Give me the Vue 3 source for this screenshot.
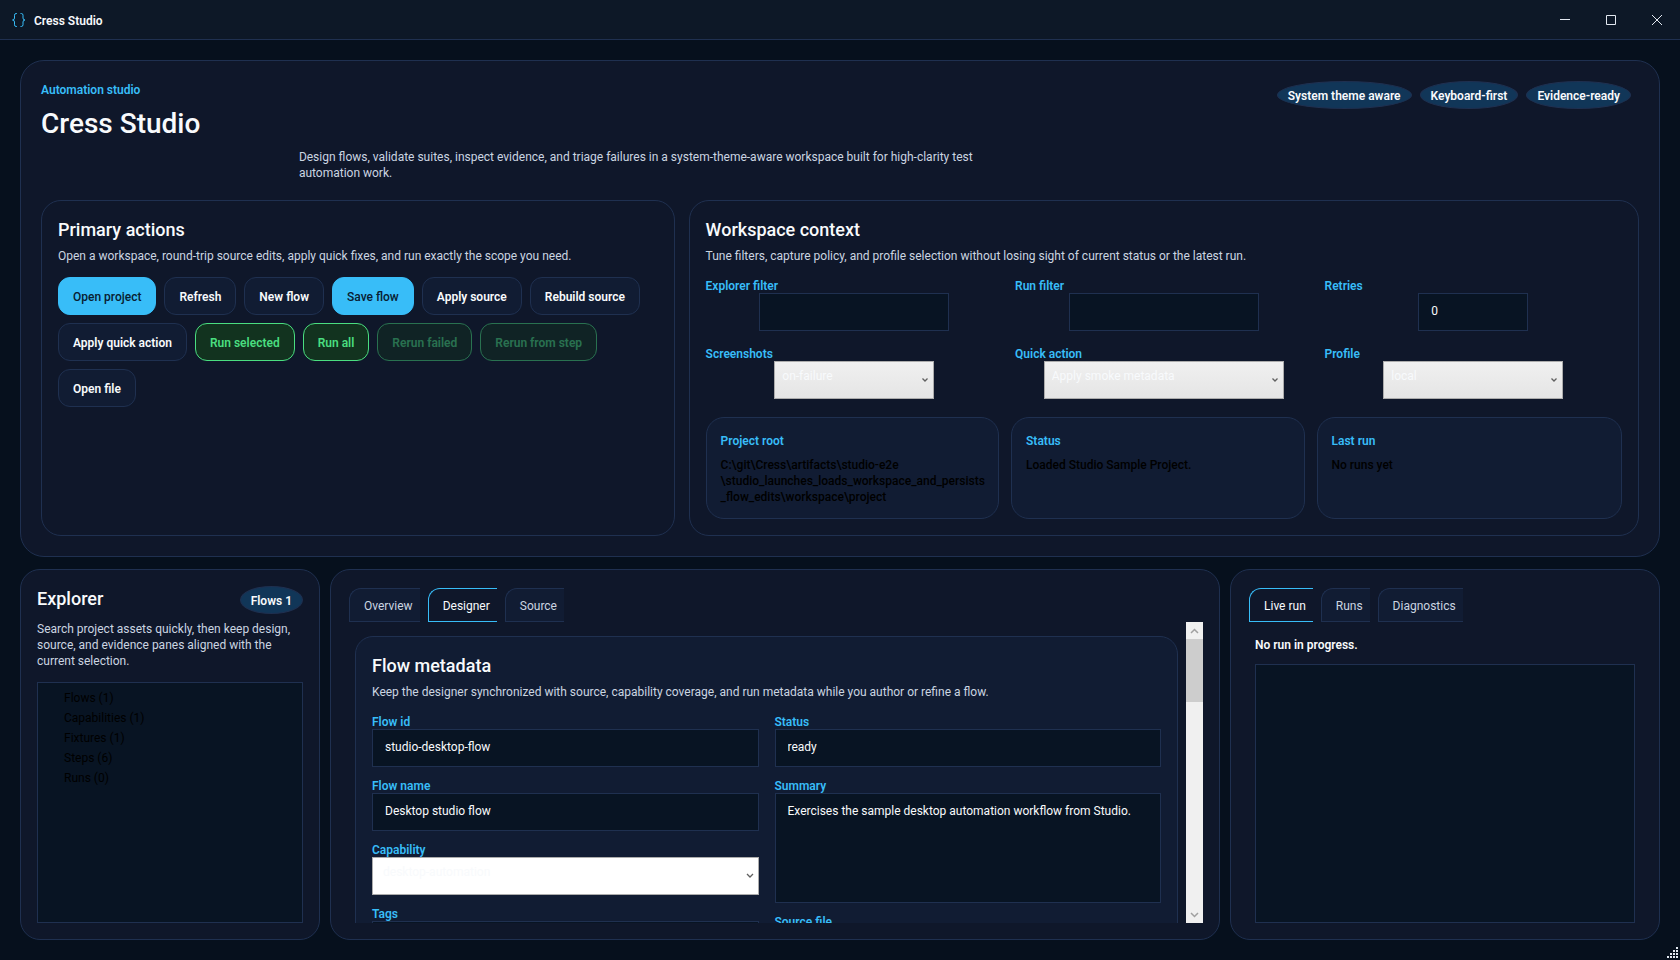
<script setup>
import { ref } from 'vue'

const pills = ['System theme aware', 'Keyboard-first', 'Evidence-ready']

const actions = [
  { label: 'Open project', kind: 'primary' },
  { label: 'Refresh', kind: 'plain' },
  { label: 'New flow', kind: 'plain' },
  { label: 'Save flow', kind: 'primary' },
  { label: 'Apply source', kind: 'plain' },
  { label: 'Rebuild source', kind: 'plain' },
  { label: 'Apply quick action', kind: 'plain' },
  { label: 'Run selected', kind: 'run' },
  { label: 'Run all', kind: 'run' },
  { label: 'Rerun failed', kind: 'run', disabled: true },
  { label: 'Rerun from step', kind: 'run', disabled: true },
  { label: 'Open file', kind: 'plain' },
]

const explorerFilter = ref('')
const runFilter = ref('')
const retries = ref('0')

const stats = [
  {
    label: 'Project root',
    lines: ['C:\\git\\Cress\\artifacts\\studio-e2e', '\\studio_launches_loads_workspace_and_persists', '_flow_edits\\workspace\\project'],
  },
  { label: 'Status', lines: ['Loaded Studio Sample Project.'] },
  { label: 'Last run', lines: ['No runs yet'] },
]

const tree = ['Flows (1)', 'Capabilities (1)', 'Fixtures (1)', 'Steps (6)', 'Runs (0)']

const editorTabs = ['Overview', 'Designer', 'Source']
const editorTab = ref('Designer')
const runTabs = ['Live run', 'Runs', 'Diagnostics']
const runTab = ref('Live run')

const flowId = ref('studio-desktop-flow')
const flowName = ref('Desktop studio flow')
const flowStatus = ref('ready')
const flowTags = ref('')
const flowSource = ref('')
const summary = ref('Exercises the sample desktop automation workflow from Studio.')
</script>

<template>
  <div class="window">
    <header class="titlebar">
      <svg class="logo" width="14" height="14" viewBox="0 0 14 14" aria-hidden="true">
        <path d="M5 .5H4.2Q2.5.5 2.5 2.2V5Q2.5 7 .5 7Q2.5 7 2.5 9V11.8Q2.5 13.5 4.2 13.5H5M8.500.5H9.300Q11 .5 11 2.200V5Q11 7 13 7Q11 7 11 9V11.800Q11 13.500 9.300 13.500H8.500" />
      </svg>
      <span class="app-name">Cress Studio</span>
      <div class="caption">
        <button type="button" aria-label="Minimize">
          <svg width="10" height="10" viewBox="0 0 10 10"><path d="M0 4.500H10" /></svg>
        </button>
        <button type="button" aria-label="Maximize">
          <svg width="10" height="10" viewBox="0 0 10 10"><path d="M.5.5H9.500V9.500H.5Z" /></svg>
        </button>
        <button type="button" aria-label="Close">
          <svg width="10" height="10" viewBox="0 0 10 10"><path d="M0 0L10 10M10 0L0 10" /></svg>
        </button>
      </div>
    </header>

    <main class="workspace">
      <section class="hero">
        <div class="hero-head">
          <div class="hero-copy">
            <p class="accent">Automation studio</p>
            <h1>Cress Studio</h1>
            <p class="lead">
              Design flows, validate suites, inspect evidence, and triage failures in a system-theme-aware workspace
              built for high-clarity test automation work.
            </p>
          </div>
          <div class="pills">
            <span v-for="p in pills" :key="p" class="pill">{{ p }}</span>
          </div>
        </div>

        <div class="hero-panels">
          <section class="panel">
            <h2>Primary actions</h2>
            <p class="muted">Open a workspace, round-trip source edits, apply quick fixes, and run exactly the scope you need.</p>
            <div class="actions">
              <button
                v-for="a in actions"
                :key="a.label"
                type="button"
                class="btn"
                :class="a.kind"
                :disabled="a.disabled"
              >{{ a.label }}</button>
            </div>
          </section>

          <section class="panel">
            <h2>Workspace context</h2>
            <p class="muted">Tune filters, capture policy, and profile selection without losing sight of current status or the latest run.</p>
            <div class="filters">
              <div class="field">
                <label for="explorer-filter">Explorer filter</label>
                <input id="explorer-filter" v-model="explorerFilter" class="box w190" type="text" />
              </div>
              <div class="field">
                <label for="run-filter">Run filter</label>
                <input id="run-filter" v-model="runFilter" class="box w190" type="text" />
              </div>
              <div class="field">
                <label for="retries">Retries</label>
                <input id="retries" v-model="retries" class="box w110" type="text" />
              </div>
              <div class="field">
                <label for="screenshots">Screenshots</label>
                <div class="combo w160">
                  <select id="screenshots"><option>on-failure</option></select>
                  <svg width="8" height="6" viewBox="0 0 8 6"><path d="M1.500 1.500L4 4L6.500 1.500" /></svg>
                </div>
              </div>
              <div class="field">
                <label for="quick-action">Quick action</label>
                <div class="combo w240">
                  <select id="quick-action"><option>Apply smoke metadata</option></select>
                  <svg width="8" height="6" viewBox="0 0 8 6"><path d="M1.500 1.500L4 4L6.500 1.500" /></svg>
                </div>
              </div>
              <div class="field">
                <label for="profile">Profile</label>
                <div class="combo w180">
                  <select id="profile"><option>local</option></select>
                  <svg width="8" height="6" viewBox="0 0 8 6"><path d="M1.500 1.500L4 4L6.500 1.500" /></svg>
                </div>
              </div>
            </div>
            <div class="stats">
              <div v-for="s in stats" :key="s.label" class="stat">
                <p class="accent">{{ s.label }}</p>
                <p class="stat-value"><span v-for="l in s.lines" :key="l">{{ l }}</span></p>
              </div>
            </div>
          </section>
        </div>
      </section>

      <div class="columns">
        <aside class="card explorer">
          <div class="explorer-head">
            <h2>Explorer</h2>
            <span class="pill">Flows 1</span>
          </div>
          <p class="muted">Search project assets quickly, then keep design, source, and evidence panes aligned with the current selection.</p>
          <ul class="tree">
            <li v-for="t in tree" :key="t">{{ t }}</li>
          </ul>
        </aside>

        <section class="card editor">
          <div class="tabs" role="tablist">
            <button
              v-for="t in editorTabs"
              :key="t"
              type="button"
              role="tab"
              class="tab"
              :class="{ active: t === editorTab }"
              :aria-selected="t === editorTab"
              @click="editorTab = t"
            >{{ t }}</button>
          </div>
          <div class="scroller">
            <div class="viewport">
              <div class="form-card">
                <h2>Flow metadata</h2>
                <p class="muted">Keep the designer synchronized with source, capability coverage, and run metadata while you author or refine a flow.</p>
                <div class="form">
                  <div class="form-col">
                    <div class="field">
                      <label for="flow-id">Flow id</label>
                      <input id="flow-id" v-model="flowId" class="box" type="text" />
                    </div>
                    <div class="field">
                      <label for="flow-name">Flow name</label>
                      <input id="flow-name" v-model="flowName" class="box" type="text" />
                    </div>
                    <div class="field">
                      <label for="capability">Capability</label>
                      <div class="combo white">
                        <select id="capability"><option>desktop-automation</option></select>
                        <svg width="8" height="6" viewBox="0 0 8 6"><path d="M1 1L4 4L7 1" /></svg>
                      </div>
                    </div>
                    <div class="field">
                      <label for="tags">Tags</label>
                      <input id="tags" v-model="flowTags" class="box" type="text" />
                    </div>
                  </div>
                  <div class="form-col">
                    <div class="field">
                      <label for="flow-status">Status</label>
                      <input id="flow-status" v-model="flowStatus" class="box" type="text" />
                    </div>
                    <div class="field">
                      <label for="summary">Summary</label>
                      <textarea id="summary" v-model="summary" class="box area"></textarea>
                    </div>
                    <div class="field">
                      <label for="source-file">Source file</label>
                      <input id="source-file" v-model="flowSource" class="box" type="text" />
                    </div>
                  </div>
                </div>
              </div>
            </div>
            <div class="scrollbar">
              <button type="button" aria-label="Scroll up">
                <svg width="9" height="6" viewBox="0 0 9 6"><path d="M1 5L4.500 1.500L8 5" /></svg>
              </button>
              <div class="thumb"></div>
              <button type="button" aria-label="Scroll down">
                <svg width="9" height="6" viewBox="0 0 9 6"><path d="M1 1L4.500 4.500L8 1" /></svg>
              </button>
            </div>
          </div>
        </section>

        <section class="card runs">
          <div class="tabs" role="tablist">
            <button
              v-for="t in runTabs"
              :key="t"
              type="button"
              role="tab"
              class="tab"
              :class="{ active: t === runTab }"
              :aria-selected="t === runTab"
              @click="runTab = t"
            >{{ t }}</button>
          </div>
          <div class="run-body">
            <p class="run-state">No run in progress.</p>
            <div class="run-log"></div>
          </div>
        </section>
      </div>
    </main>

    <svg class="grip" width="11" height="11" viewBox="0 0 11 11" aria-hidden="true">
      <path d="M9 0h2v2h-2zM6 3h2v2h-2zM9 3h2v2h-2zM3 6h2v2h-2zM6 6h2v2h-2zM9 6h2v2h-2zM0 9h2v2h-2zM3 9h2v2h-2zM6 9h2v2h-2zM9 9h2v2h-2z" />
    </svg>
  </div>
</template>

<style>
body {
  background: #06101d;
}
</style>

<style scoped>
.window {
  --line: #1f3050;
  position: relative;
  display: flex;
  flex-direction: column;
  height: 100vh;
  box-sizing: border-box;
  overflow: hidden;
  background: #06101d;
  color: #f8fafc;
  font-family: "Segoe UI", Roboto, "Open Sans", sans-serif;
  font-size: 12px;
  line-height: 16px;
}

.window *,
.window *::before {
  box-sizing: border-box;
}

h1,
h2,
p,
ul {
  margin: 0;
  padding: 0;
  font-weight: 400;
}

button,
input,
select,
textarea {
  font: inherit;
  margin: 0;
}

.titlebar {
  display: flex;
  align-items: center;
  flex: none;
  height: 40px;
  padding-left: 12px;
  background: #0d1827;
  border-bottom: 1px solid var(--line);
}

.logo path {
  fill: none;
  stroke: #38bdf8;
}

.app-name {
  margin-left: 8px;
  padding-top: 2px;
  font-weight: 600;
}

.caption {
  display: flex;
  height: 100%;
  margin-left: auto;
}

.caption button {
  display: flex;
  align-items: center;
  justify-content: center;
  width: 46px;
  padding: 0;
  border: 0;
  background: none;
}

.caption path {
  fill: none;
  stroke: #e2e8f0;
}

.workspace {
  display: flex;
  flex-direction: column;
  flex: 1;
  gap: 12px;
  min-height: 0;
  padding: 20px;
}

.hero {
  flex: none;
  padding: 20px;
  background: #0f172a;
  border: 1px solid var(--line);
  border-radius: 24px;
}

.hero-head {
  display: flex;
  align-items: flex-start;
}

.hero-copy {
  flex: 1;
}

.accent,
.field label,
.run-state {
  padding-top: 2px;
  line-height: 14px;
  font-weight: 600;
}

.accent,
.field label {
  color: #38bdf8;
}

h1 {
  margin-top: 8px;
  font-size: 28px;
  line-height: 38px;
  font-weight: 500;
}

.lead {
  max-width: 720px;
  margin: 6px auto 0;
  color: #cbd5e1;
}

.pills {
  display: flex;
  gap: 8px;
  padding-right: 8px;
}

.pill {
  padding: 6px 10px 4px;
  background: #113658;
  border: 1px solid var(--line);
  border-radius: 50%;
  font-weight: 600;
  white-space: nowrap;
}

.hero-panels {
  display: grid;
  grid-template-columns: 2fr 3fr;
  gap: 14px;
  margin-top: 19px;
}

.panel {
  min-width: 0;
  padding: 16px;
  border: 1px solid var(--line);
  border-radius: 20px;
}

h2 {
  padding-top: 2px;
  font-size: 18px;
  line-height: 22px;
  font-weight: 500;
}

.muted {
  margin-top: 7px;
  color: #cbd5e1;
}

.actions {
  display: flex;
  flex-wrap: wrap;
  gap: 8px;
  margin-top: 13px;
}

.btn {
  height: 38px;
  padding: 2px 14px 0;
  border: 1px solid var(--line);
  border-radius: 12px;
  background: #111c33;
  color: #f8fafc;
  font-weight: 600;
}

.btn.primary {
  background: #38bdf8;
  border-color: #38bdf8;
  color: #082032;
  font-weight: 500;
}

.btn.run {
  background: #12331f;
  border-color: #4ade80;
  color: #4ade80;
}

.btn:disabled {
  opacity: 0.45;
}

.filters {
  display: grid;
  grid-template-columns: repeat(3, 1fr);
  gap: 14px 12px;
  margin-top: 13px;
}

.field {
  display: flex;
  flex-direction: column;
}

.filters .field > .box,
.filters .combo {
  align-self: center;
}

.box {
  width: 100%;
  height: 38px;
  padding: 0 12px 2px;
  background: #081423;
  border: 1px solid var(--line);
  border-radius: 0;
  color: #f8fafc;
  outline: none;
}

.area {
  height: 110px;
  padding: 9px 12px;
  resize: none;
}

.w110 {
  width: 110px;
}

.w160 {
  width: 160px;
}

.w180 {
  width: 180px;
}

.w190 {
  width: 190px;
}

.w240 {
  width: 240px;
}

.combo {
  position: relative;
}

.combo select {
  display: block;
  width: 100%;
  height: 38px;
  padding: 0 20px 8px 7px;
  appearance: none;
  background: linear-gradient(#f0f0f0, #e5e5e5);
  border: 1px solid #acacac;
  border-radius: 0;
  color: #f8fafc;
}

.combo svg {
  position: absolute;
  right: 5px;
  top: 16px;
  pointer-events: none;
}

.combo path {
  fill: none;
  stroke: #606060;
  stroke-width: 1.3;
}

.combo.white select {
  padding-left: 10px;
  background: #ffffff;
}

.stats {
  display: grid;
  grid-template-columns: repeat(3, minmax(0, 1fr));
  margin-top: 18px;
}

.stat {
  padding: 14px 14px 13px;
  background: #111c33;
  border: 1px solid var(--line);
  border-radius: 18px;
}

.stat:not(:last-child) {
  margin-right: 12px;
}

.stat-value {
  margin-top: 9px;
  color: #000000;
  font-weight: 500;
}

.stat-value span {
  display: block;
  white-space: nowrap;
}

.columns {
  display: grid;
  grid-template-columns: 300px 1fr 430px;
  gap: 10px;
  flex: 1;
  min-height: 0;
}

.card {
  display: flex;
  flex-direction: column;
  min-width: 0;
  min-height: 0;
  padding: 16px;
  background: #0f172a;
  border: 1px solid var(--line);
  border-radius: 20px;
}

.explorer-head {
  display: flex;
  align-items: flex-start;
  justify-content: space-between;
}

.tree {
  flex: 1;
  margin-top: 13px;
  padding: 5px 0 0 26px;
  background: #081423;
  border: 1px solid var(--line);
  color: #000000;
  list-style: none;
}

.tree li {
  line-height: 20px;
}

.tabs {
  display: flex;
  flex: none;
  gap: 8px;
  padding: 2px 2px 0;
}

.tab {
  height: 34px;
  padding: 2px 7px 0 14px;
  background: #111c33;
  border: 1px solid var(--line);
  border-right: 0;
  border-radius: 12px 0 0 0;
  color: #cbd5e1;
}

.tab.active {
  background: #0f172a;
  border-color: #38bdf8;
  color: #f8fafc;
}

.scroller {
  display: flex;
  flex: 1;
  min-height: 0;
}

.viewport {
  flex: 1;
  min-width: 0;
  padding: 14px 8px 0;
  overflow: hidden;
}

.form-card {
  padding: 16px;
  background: #111c33;
  border: 1px solid var(--line);
  border-radius: 18px;
}

.form {
  display: grid;
  grid-template-columns: 1fr 1fr;
  gap: 16px;
  margin-top: 13px;
}

.form-col {
  display: flex;
  flex-direction: column;
  gap: 10px;
}

.scrollbar {
  display: flex;
  flex-direction: column;
  flex: none;
  width: 17px;
  background: #f0f0f0;
}

.scrollbar button {
  display: flex;
  align-items: center;
  justify-content: center;
  height: 17px;
  padding: 0;
  border: 0;
  background: none;
}

.scrollbar button:last-child {
  margin-top: auto;
}

.scrollbar path {
  fill: none;
  stroke: #a0a0a0;
  stroke-width: 1.5;
}

.thumb {
  height: 63px;
  background: #cdcdcd;
}

.run-body {
  display: flex;
  flex: 1;
  flex-direction: column;
  gap: 12px;
  padding: 14px 8px 0;
}

.run-log {
  flex: 1;
  background: #081423;
  border: 1px solid var(--line);
}

.grip {
  position: absolute;
  right: 2px;
  bottom: 2px;
}

.grip path {
  fill: #e2e8f0;
}
</style>
